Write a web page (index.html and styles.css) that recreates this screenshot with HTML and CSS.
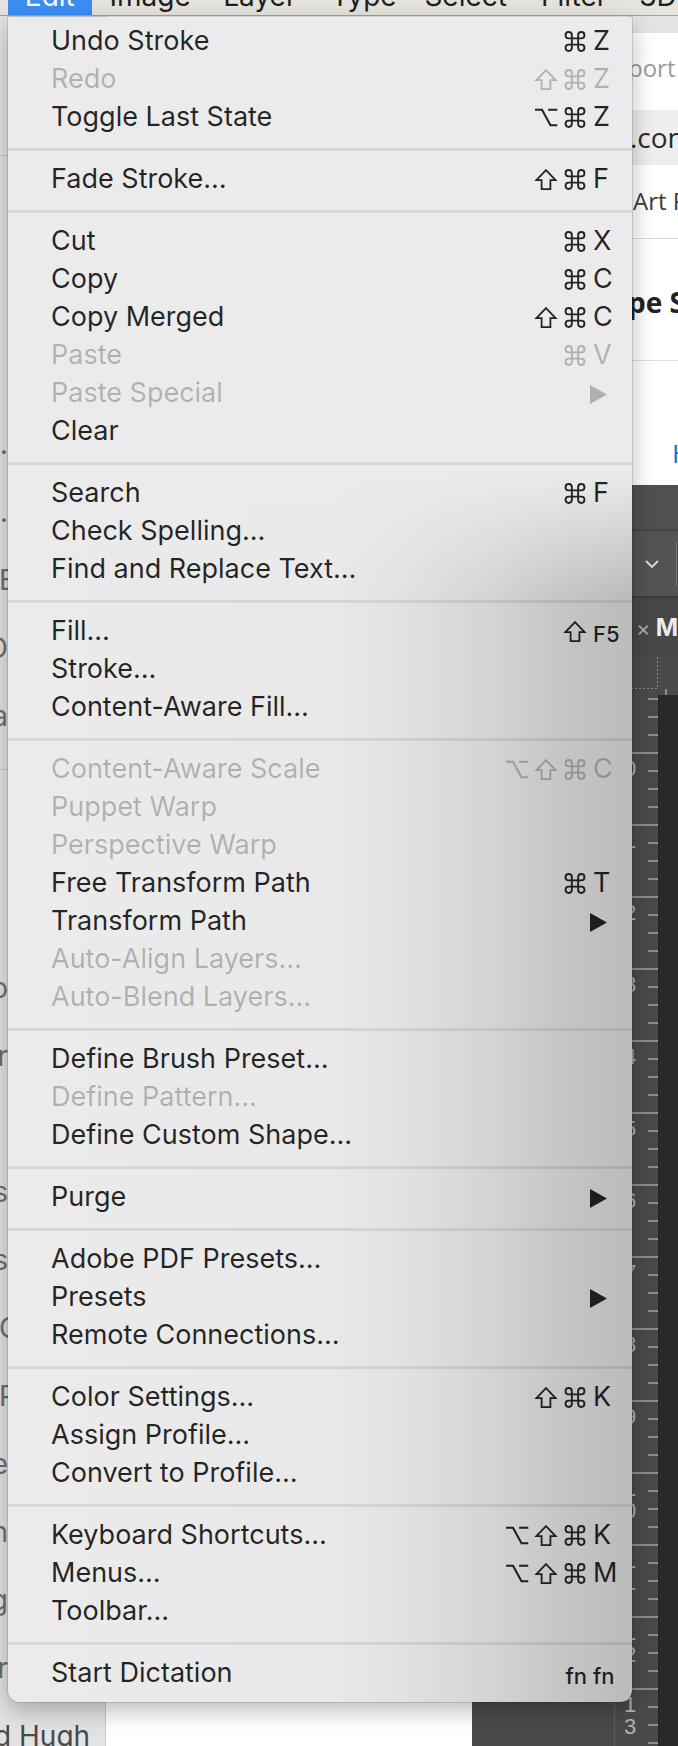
FILE: index.html
```html
<!DOCTYPE html>
<html lang="en">
<head>
<meta charset="utf-8">
<title>Edit menu</title>
<link rel="stylesheet" href="styles.css">
</head>
<body>
<svg class="defs" aria-hidden="true">
  <symbol id="cmd" viewBox="2 2 20 20"><path d="M18 3a3 3 0 0 0-3 3v12a3 3 0 0 0 3 3 3 3 0 0 0 3-3 3 3 0 0 0-3-3H6a3 3 0 0 0-3 3 3 3 0 0 0 3 3 3 3 0 0 0 3-3V6a3 3 0 0 0-3-3 3 3 0 0 0-3 3 3 3 0 0 0 3 3h12a3 3 0 0 0 3-3 3 3 0 0 0-3-3z" fill="none" stroke="currentColor" stroke-width="1.8"/></symbol>
  <symbol id="shift" viewBox="1.5 1.5 21 21"><path d="M12 2.6L21.6 12.6H16.4V21.6H7.6V12.6H2.4Z" fill="none" stroke="currentColor" stroke-width="1.8" stroke-linejoin="miter"/></symbol>
  <symbol id="opt" viewBox="0.5 3 23 18"><path d="M1.5 4.6H8.2L16.3 19.4H22.8M14 4.6H22.8" fill="none" stroke="currentColor" stroke-width="2"/></symbol>
  <symbol id="arrow" viewBox="0 0 17 19"><path d="M0 0L17 9.5L0 19Z" fill="currentColor"/></symbol>
</svg>
<div class="screen">
  <div class="menubar">
    <div class="mb-row">
      <span class="mb-item mb-edit">Edit</span>
      <span class="mb-item mb-image">Image</span>
      <span class="mb-item mb-layer">Layer</span>
      <span class="mb-item mb-type">Type</span>
      <span class="mb-item mb-select">Select</span>
      <span class="mb-item mb-filter">Filter</span>
      <span class="mb-item mb-3d">3D</span>
    </div>
  </div>

  <div class="desktop">
    <div class="win-left">
      <div class="lw-top"></div>
      <div class="lw-lines">
        <div class="lw-line end"><span>nces…</span></div>
        <div class="lw-line end"><span>nts…</span></div>
        <div class="lw-line start"><span>E</span></div>
        <div class="lw-line end"><span>O</span></div>
        <div class="lw-line end"><span>a</span></div>
        <div class="lw-line rule"></div>
        <div class="lw-line"></div>
        <div class="lw-line"></div>
        <div class="lw-line end"><span>o</span></div>
        <div class="lw-line end"><span>r</span></div>
        <div class="lw-line"></div>
        <div class="lw-line end"><span>s</span></div>
        <div class="lw-line end"><span>s</span></div>
        <div class="lw-line start"><span>C</span></div>
        <div class="lw-line start"><span>P</span></div>
        <div class="lw-line end"><span>e</span></div>
        <div class="lw-line end"><span>n</span></div>
        <div class="lw-line end"><span>g</span></div>
        <div class="lw-line end"><span>r</span></div>
        <div class="lw-line last"><span>d Hugh</span></div>
      </div>
    </div>

    <div class="web-top">
      <div class="web-side">
        <div class="ws-bar"></div>
        <div class="ws-port">port</div>
        <div class="ws-band">.com</div>
        <div class="ws-art">Art P</div>
        <div class="ws-line"></div>
        <div class="ws-bold">pe S</div>
        <div class="ws-line ws-line2"></div>
        <div class="ws-link">H</div>
      </div>
    </div>
    <div class="web-bottom"></div>

    <div class="ps">
      <div class="ps-bar1"></div>
      <div class="ps-bar2">
        <svg class="chev" viewBox="0 0 14 8"><path d="M1 1L7 7L13 1" fill="none" stroke="currentColor" stroke-width="1.8"/></svg>
        <span class="ps-field"></span>
      </div>
      <div class="ps-tabs"><span class="tab-x">×</span><span class="tab-name">M</span></div>
      <div class="ps-work">
        <div class="ps-tool"></div>
        <div class="ps-rulercol">
          <div class="ps-corner"></div>
          <div class="ps-vruler">
            <div class="rn"><span>0</span></div>
            <div class="rn"><span>1</span></div>
            <div class="rn"><span>2</span></div>
            <div class="rn"><span>3</span></div>
            <div class="rn"><span>4</span></div>
            <div class="rn"><span>5</span></div>
            <div class="rn"><span>6</span></div>
            <div class="rn"><span>7</span></div>
            <div class="rn"><span>8</span></div>
            <div class="rn"><span>9</span></div>
            <div class="rn"><span>1</span><span>0</span></div>
            <div class="rn"><span>1</span><span>1</span></div>
            <div class="rn"><span>1</span><span>2</span></div>
            <div class="rn"><span>1</span><span>3</span></div>
          </div>
        </div>
        <div class="ps-canvascol">
          <div class="ps-hruler"></div>
          <div class="ps-canvas"></div>
        </div>
      </div>
    </div>
  </div>

  <div class="menu">
    <div class="item"><span class="label">Undo Stroke</span><span class="sc"><span class="mods"><svg class="ic"><use href="#cmd"/></svg></span><span class="key">Z</span></span></div>
    <div class="item dis"><span class="label">Redo</span><span class="sc"><span class="mods"><svg class="ic"><use href="#shift"/></svg><svg class="ic"><use href="#cmd"/></svg></span><span class="key">Z</span></span></div>
    <div class="item"><span class="label">Toggle Last State</span><span class="sc"><span class="mods"><svg class="ic"><use href="#opt"/></svg><svg class="ic"><use href="#cmd"/></svg></span><span class="key">Z</span></span></div>
    <div class="sep"></div>
    <div class="item"><span class="label">Fade Stroke…</span><span class="sc"><span class="mods"><svg class="ic"><use href="#shift"/></svg><svg class="ic"><use href="#cmd"/></svg></span><span class="key">F</span></span></div>
    <div class="sep"></div>
    <div class="item"><span class="label">Cut</span><span class="sc"><span class="mods"><svg class="ic"><use href="#cmd"/></svg></span><span class="key">X</span></span></div>
    <div class="item"><span class="label">Copy</span><span class="sc"><span class="mods"><svg class="ic"><use href="#cmd"/></svg></span><span class="key">C</span></span></div>
    <div class="item"><span class="label">Copy Merged</span><span class="sc"><span class="mods"><svg class="ic"><use href="#shift"/></svg><svg class="ic"><use href="#cmd"/></svg></span><span class="key">C</span></span></div>
    <div class="item dis"><span class="label">Paste</span><span class="sc"><span class="mods"><svg class="ic"><use href="#cmd"/></svg></span><span class="key">V</span></span></div>
    <div class="item dis"><span class="label">Paste Special</span><span class="sc"><span class="mods"></span><span class="key"><svg class="sub"><use href="#arrow"/></svg></span></span></div>
    <div class="item"><span class="label">Clear</span></div>
    <div class="sep"></div>
    <div class="item"><span class="label">Search</span><span class="sc"><span class="mods"><svg class="ic"><use href="#cmd"/></svg></span><span class="key">F</span></span></div>
    <div class="item"><span class="label">Check Spelling…</span></div>
    <div class="item"><span class="label">Find and Replace Text…</span></div>
    <div class="sep"></div>
    <div class="item"><span class="label">Fill…</span><span class="sc"><span class="mods"><svg class="ic"><use href="#shift"/></svg></span><span class="key small">F5</span></span></div>
    <div class="item"><span class="label">Stroke…</span></div>
    <div class="item"><span class="label">Content-Aware Fill…</span></div>
    <div class="sep"></div>
    <div class="item dis"><span class="label">Content-Aware Scale</span><span class="sc"><span class="mods"><svg class="ic"><use href="#opt"/></svg><svg class="ic"><use href="#shift"/></svg><svg class="ic"><use href="#cmd"/></svg></span><span class="key">C</span></span></div>
    <div class="item dis"><span class="label">Puppet Warp</span></div>
    <div class="item dis"><span class="label">Perspective Warp</span></div>
    <div class="item"><span class="label">Free Transform Path</span><span class="sc"><span class="mods"><svg class="ic"><use href="#cmd"/></svg></span><span class="key">T</span></span></div>
    <div class="item"><span class="label">Transform Path</span><span class="sc"><span class="mods"></span><span class="key"><svg class="sub"><use href="#arrow"/></svg></span></span></div>
    <div class="item dis"><span class="label">Auto-Align Layers…</span></div>
    <div class="item dis"><span class="label">Auto-Blend Layers…</span></div>
    <div class="sep"></div>
    <div class="item"><span class="label">Define Brush Preset…</span></div>
    <div class="item dis"><span class="label">Define Pattern…</span></div>
    <div class="item"><span class="label">Define Custom Shape…</span></div>
    <div class="sep"></div>
    <div class="item"><span class="label">Purge</span><span class="sc"><span class="mods"></span><span class="key"><svg class="sub"><use href="#arrow"/></svg></span></span></div>
    <div class="sep"></div>
    <div class="item"><span class="label">Adobe PDF Presets…</span></div>
    <div class="item"><span class="label">Presets</span><span class="sc"><span class="mods"></span><span class="key"><svg class="sub"><use href="#arrow"/></svg></span></span></div>
    <div class="item"><span class="label">Remote Connections…</span></div>
    <div class="sep"></div>
    <div class="item"><span class="label">Color Settings…</span><span class="sc"><span class="mods"><svg class="ic"><use href="#shift"/></svg><svg class="ic"><use href="#cmd"/></svg></span><span class="key">K</span></span></div>
    <div class="item"><span class="label">Assign Profile…</span></div>
    <div class="item"><span class="label">Convert to Profile…</span></div>
    <div class="sep"></div>
    <div class="item"><span class="label">Keyboard Shortcuts…</span><span class="sc"><span class="mods"><svg class="ic"><use href="#opt"/></svg><svg class="ic"><use href="#shift"/></svg><svg class="ic"><use href="#cmd"/></svg></span><span class="key">K</span></span></div>
    <div class="item"><span class="label">Menus…</span><span class="sc"><span class="mods"><svg class="ic"><use href="#opt"/></svg><svg class="ic"><use href="#shift"/></svg><svg class="ic"><use href="#cmd"/></svg></span><span class="key">M</span></span></div>
    <div class="item"><span class="label">Toolbar…</span></div>
    <div class="sep"></div>
    <div class="item"><span class="label">Start Dictation</span><span class="sc"><span class="mods"><span class="fn">fn</span></span><span class="key small">fn</span></span></div>
  </div>
</div>
</body>
</html>
```
FILE: styles.css
```css
* { box-sizing: border-box; }
html, body { margin: 0; padding: 0; }
body {
  width: 678px;
  height: 1746px;
  overflow: hidden;
  background: #ffffff;
  font-family: Inter, "Noto Sans", "Liberation Sans", sans-serif;
}
.defs { position: absolute; width: 0; height: 0; overflow: hidden; }
.screen { position: relative; width: 678px; height: 1746px; overflow: hidden; }

/* ---------- menu bar ---------- */
.menubar {
  height: 16px;
  background: #e6e4de;
  border-bottom: 1px solid #a3a19c;
  overflow: hidden;
}
.mb-row {
  display: flex;
  margin-top: -18px;
  height: 34px;
  font-size: 28px;
  line-height: 28px;
  color: #1f1f1f;
  white-space: nowrap;
}
.mb-item { display: block; height: 34px; }
.mb-edit { margin-left: 8px; width: 86px; background: #3c8df4; color: #ffffff; text-align: center; }
.mb-image { margin-left: 18px; width: 117px; }
.mb-layer { width: 111px; }
.mb-type { width: 96px; }
.mb-select { width: 120px; }
.mb-filter { width: 101px; }
.mb-3d { width: 40px; }

/* ---------- desktop ---------- */
.desktop {
  display: grid;
  grid-template-columns: 106px 366px 206px;
  grid-template-rows: 469px 1261px;
  height: 1730px;
}

.win-left {
  grid-row: 1 / 3;
  grid-column: 1;
  background: #e3e3e3;
  border-right: 1px solid #c7c7c7;
  overflow: hidden;
  color: #6e6e6e;
  font-size: 28px;
  white-space: nowrap;
}
.lw-top { height: 140px; border-bottom: 1px solid #c9c9c9; }
.lw-lines { padding-top: 254px; }
.lw-line { height: 68px; line-height: 68px; display: flex; width: 8px; }
.lw-line.end { justify-content: flex-end; }
.lw-line.start { justify-content: flex-start; margin-left: -1px; }
.lw-line.rule { width: 106px; padding-top: 19px; }
.lw-line.rule::before { content: ""; display: block; width: 100%; height: 1px; background: #c6c6c6; }
.lw-line.last { width: 106px; margin-left: -6px; color: #4a4a4a; }

.web-top {
  grid-row: 1;
  grid-column: 2 / 4;
  background: #ffffff;
  display: flex;
  justify-content: flex-end;
}
.web-side {
  width: 50px;
  overflow: hidden;
  white-space: nowrap;
  display: flex;
  flex-direction: column;
  font-family: "Open Sans", "Noto Sans", sans-serif;
}
.ws-bar { height: 17px; background: #e4e4e4; }
.ws-port { margin-top: 20px; height: 30px; line-height: 30px; font-size: 24px; color: #9b9b9b; }
.ws-band { margin-top: 27px; height: 55px; line-height: 55px; background: #eeeeee; font-size: 28px; color: #2b2b2b; padding-left: 2px; }
.ws-art { margin-top: 21px; height: 30px; line-height: 30px; font-size: 24px; color: #3c3c3c; padding-left: 5px; }
.ws-line { margin-top: 22px; height: 1px; background: #dddddd; }
.ws-bold { margin-top: 48px; height: 30px; line-height: 30px; font-size: 28px; font-weight: 700; color: #232323; padding-left: 0; }
.ws-line2 { margin-top: 43px; }
.ws-link { margin-top: 77px; height: 30px; line-height: 30px; font-size: 26px; color: #1473e6; padding-left: 44px; }

.web-bottom { grid-row: 2; grid-column: 2; background: #ffffff; }

/* ---------- photoshop window ---------- */
.ps {
  grid-row: 2;
  grid-column: 3;
  display: flex;
  flex-direction: column;
  background: #535353;
  overflow: hidden;
}
.ps-bar1 { height: 46px; background: #505050; border-bottom: 2px solid #444444; flex: none; }
.ps-bar2 {
  height: 67px;
  flex: none;
  background: #535353;
  border-bottom: 2px solid #3d3d3d;
  display: flex;
  align-items: center;
  justify-content: flex-end;
  color: #dcdcdc;
}
.chev { width: 14px; height: 8px; margin-right: 17px; }
.ps-field { width: 2px; height: 44px; border-left: 1px solid #767676; background: #454545; }
.ps-tabs {
  height: 59px;
  flex: none;
  background: #474747;
  display: flex;
  align-items: center;
  padding-left: 164px;
  white-space: nowrap;
}
.tab-x { color: #a8a8a8; font-size: 22px; width: 30px; }
.tab-name { color: #ececec; font-size: 24px; font-weight: 700; }
.ps-work { flex: 1; display: flex; }
.ps-tool { width: 143px; background: #4a4a4a; border-right: 1px solid #5e5e5e; }
.ps-rulercol { width: 43px; display: flex; flex-direction: column; background: #4a4a4a; }
.ps-corner {
  height: 38px;
  flex: none;
  background:
    repeating-linear-gradient(to bottom, #8a8a8a 0 2px, transparent 2px 4px) right 0 top 0 / 1px 31px no-repeat,
    repeating-linear-gradient(to right, #8a8a8a 0 2px, transparent 2px 4px) left 0 top 31px / 100% 1px no-repeat,
    #4a4a4a;
}
.ps-vruler {
  flex: 1;
  padding-top: 63px;
  background:
    linear-gradient(to bottom, #8c8c8c 0 2px, transparent 2px 72px) left 0 top 57px / 100% 72px repeat-y,
    linear-gradient(to bottom, #8c8c8c 0 2px, transparent 2px 18px) right 0 top 3px / 10px 18px repeat-y,
    #4a4a4a;
  color: #b2b2b2;
  font-family: "Liberation Sans", Arial, sans-serif;
  font-size: 22px;
  line-height: 22px;
}
.rn { height: 72px; padding-left: 9px; }
.rn span { display: block; }
.ps-canvascol { flex: 1; display: flex; flex-direction: column; }
.ps-hruler {
  height: 38px;
  flex: none;
  background:
    linear-gradient(#8c8c8c, #8c8c8c) left 7px bottom 0 / 2px 6px no-repeat,
    #4a4a4a;
}
.ps-canvas { flex: 1; background: #282828; border-left: 1px solid #222222; }

/* ---------- the Edit menu ---------- */
.menu {
  position: absolute;
  left: 8px;
  top: 17px;
  width: 624px;
  height: 1685px;
  padding: 5px 0 10px;
  border-radius: 0 0 12px 12px;
  background:
    linear-gradient(to bottom, #ebebeb 0, #ebebeb 455px, rgba(235, 235, 235, 0) 580px),
    linear-gradient(to right, #ebebeb 0, #e9e9e9 320px, #e2e2e2 392px, #d4d4d4 482px, #c6c6c6 552px, #bbbbbb 624px);
  box-shadow: 0 0 0 1px rgba(0, 0, 0, 0.11), 0 8px 24px rgba(0, 0, 0, 0.28);
}
.item {
  display: flex;
  height: 38px;
  padding-left: 43px;
  font-size: 27px;
  line-height: 38px;
  color: rgba(0, 0, 0, 0.85);
  white-space: nowrap;
}
.item.dis { color: rgba(0, 0, 0, 0.25); }
.label { flex: 1; }
.sc { display: flex; align-self: stretch; }
.mods {
  width: 130px;
  margin-right: 6px;
  display: flex;
  justify-content: flex-end;
  align-items: center;
  gap: 5px;
}
.ic { width: 24px; height: 21px; display: block; }
.key { width: 39px; line-height: 38px; }
.key.small, .fn { font-size: 22px; font-weight: 500; line-height: 44px; }
.fn { align-self: flex-start; }
.sub { display: block; width: 17px; height: 19px; margin-left: -3px; margin-top: 11px; }

.sep { height: 24px; padding-top: 12px; }
.sep::before { content: ""; display: block; height: 3px; background: rgba(0, 0, 0, 0.08); }
```
